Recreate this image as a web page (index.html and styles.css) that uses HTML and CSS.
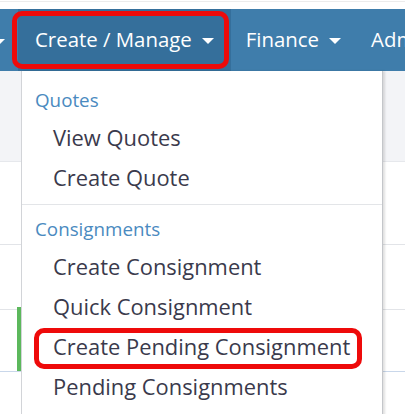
FILE: index.html
```html
<!DOCTYPE html>
<html>
<head>
<meta charset="utf-8">
<link rel="stylesheet" href="styles.css">
</head>
<body>
<div class="topstrip"></div>
<nav class="navbar">
  <div class="nav-item nav-partial"><span class="caret"></span></div>
  <div class="nav-item active">Create / Manage<span class="caret"></span><span class="highlight"></span></div>
  <div class="nav-item">Finance<span class="caret"></span></div>
  <div class="nav-item">Admin<span class="caret"></span></div>
</nav>
<main class="content">
  <div class="row row-head"></div>
  <div class="row row-a"></div>
  <div class="row row-b"></div>
  <div class="row row-c"><span class="flag"></span></div>
  <div class="row row-d"></div>
  <ul class="dropdown">
    <li class="dd-header">Quotes</li>
    <li class="dd-item">View Quotes</li>
    <li class="dd-item">Create Quote</li>
    <li class="dd-divider"></li>
    <li class="dd-header">Consignments</li>
    <li class="dd-item">Create Consignment</li>
    <li class="dd-item">Quick Consignment</li>
    <li class="dd-item marked">Create Pending Consignment<span class="highlight"></span></li>
    <li class="dd-item">Pending Consignments</li>
  </ul>
</main>
</body>
</html>
```

FILE: styles.css
```css
html, body {
  margin: 0;
  padding: 0;
  background: #ffffff;
  font-family: "Open Sans", "Liberation Sans", sans-serif;
  width: 405px;
  height: 414px;
  overflow: hidden;
}

.topstrip {
  height: 9px;
  background: linear-gradient(#ffffff 0, #ffffff 1px, #ececec 1px, #ececec 2px, #ffffff 2px);
}

.navbar {
  display: flex;
  height: 62px;
  background: #3f7dab;
  overflow: hidden;
  white-space: nowrap;
}

.nav-item {
  position: relative;
  display: flex;
  align-items: center;
  padding: 0 15px 2px 15px;
  color: #ffffff;
  font-size: 20.4px;
  flex-shrink: 0;
}

.nav-partial {
  padding: 0 13px 0 0;
  margin-left: -7px;
}

.nav-partial .caret {
  margin-left: 0;
}

.nav-item.active {
  background: #356f9b;
  padding-left: 17px;
  padding-right: 17px;
}

.caret {
  display: inline-block;
  width: 0;
  height: 0;
  margin-left: 10px;
  margin-top: 3px;
  border-top: 6px solid #ffffff;
  border-left: 6px solid transparent;
  border-right: 6px solid transparent;
}

.highlight {
  position: absolute;
  box-sizing: border-box;
  border: 5px solid #ee0a0a;
  border-radius: 10px;
  pointer-events: none;
}

.nav-item.active .highlight {
  left: -6px;
  right: 2px;
  top: 2px;
  bottom: 2px;
}

.content {
  position: relative;
}

.row {
  border-bottom: 1px solid #e2e4e8;
}

.row-head {
  height: 90px;
  background: #f3f4f7;
  border-bottom: 1px solid #e6e8ec;
}

.row-a {
  height: 82px;
}

.row-b {
  height: 64px;
}

.row-c {
  height: 61px;
  border-bottom: 1px solid #c9d7ea;
  display: flex;
}

.flag {
  margin-left: 17px;
  margin-top: -3px;
  width: 4px;
  height: 64px;
  background: #5cb85c;
}

.row-d {
  height: 60px;
  border-bottom: none;
}

.dropdown {
  position: absolute;
  top: 0;
  left: 21px;
  width: 360px;
  height: 400px;
  margin: 0;
  padding: 11px 0 0 0;
  list-style: none;
  background: #ffffff;
  border-left: 1px solid #d2d4d8;
  border-right: 1px solid #c4c6ca;
  box-shadow: 2px 0 2px rgba(0, 0, 0, 0.12);
}

.dd-header {
  height: 36px;
  line-height: 36px;
  padding-left: 13px;
  font-size: 18.8px;
  color: #4a8ac0;
}

.dd-item {
  position: relative;
  height: 40px;
  line-height: 40px;
  padding-left: 31px;
  font-size: 21.9px;
  color: #3a3a4c;
  white-space: nowrap;
}

.dd-divider {
  height: 1px;
  margin: 6px 0;
  background: #e3e5e8;
}

.dd-item.marked .highlight {
  left: 12px;
  width: 328px;
  top: 1px;
  bottom: -2px;
}
```
